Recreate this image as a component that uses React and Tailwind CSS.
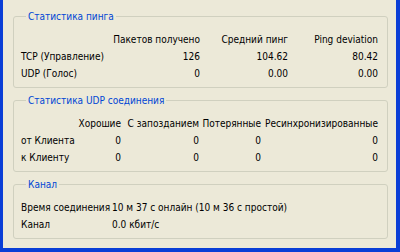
const pingRows = [
  { name: "TCP (Управление)", received: "126", avg: "104.62", dev: "80.42" },
  { name: "UDP (Голос)", received: "0", avg: "0.00", dev: "0.00" },
];

const udpRows = [
  { name: "от Клиента", values: ["0", "0", "0", "0"] },
  { name: "к Клиенту", values: ["0", "0", "0", "0"] },
];

const Group = ({ title, children }) => (
  <fieldset className="border border-[#d0d0bf] rounded-[3px] pl-[7px] pr-[9px] pt-[8px] pb-[5px]">
    <legend className="ml-[5px] px-[2px] text-[#0046d5] leading-[13px]">{title}</legend>
    {children}
  </fieldset>
);

// right aligned cell that spills to the left when the text is wider than the column
const R = ({ children }) => (
  <div className="flex justify-end whitespace-nowrap">{children}</div>
);

export default function App() {
  return (
    <div
      className="w-[400px] h-[252px] bg-[#ece9d8] border-l-[3px] border-r-[4px] border-b-[4px] border-[#0a3ed6] pl-[10px] pr-[8px] pt-[10px] flex flex-col gap-[6px] text-[10px] text-black"
      style={{ fontFamily: '"DejaVu Sans Condensed", "Liberation Sans", Arial, sans-serif' }}
    >
      <Group title="Статистика пинга">
        <div className="grid grid-cols-[84px_95px_88px_90px] leading-[17px]">
          <div></div>
          <R>Пакетов получено</R>
          <R>Средний пинг</R>
          <R>Ping deviation</R>
          {pingRows.map((r) => (
            <>
              <div key={r.name} className="whitespace-nowrap">{r.name}</div>
              <R>{r.received}</R>
              <R>{r.avg}</R>
              <R>{r.dev}</R>
            </>
          ))}
        </div>
      </Group>

      <Group title="Статистика UDP соединения">
        <div className="grid grid-cols-[56px_44px_78px_62px_117px] leading-[17px]">
          <div></div>
          <R>Хорошие</R>
          <R>С запозданием</R>
          <R>Потерянные</R>
          <R>Ресинхронизированные</R>
          {udpRows.map((r) => (
            <>
              <div key={r.name} className="whitespace-nowrap">{r.name}</div>
              {r.values.map((v, i) => (
                <R key={i}>{v}</R>
              ))}
            </>
          ))}
        </div>
      </Group>

      <Group title="Канал">
        <div className="grid grid-cols-[91px_1fr] leading-[17px]">
          <div className="whitespace-nowrap">Время соединения</div>
          <div className="whitespace-nowrap">10 м 37 с онлайн (10 м 36 с простой)</div>
          <div>Канал</div>
          <div>0.0 кбит/с</div>
        </div>
      </Group>
    </div>
  );
}
